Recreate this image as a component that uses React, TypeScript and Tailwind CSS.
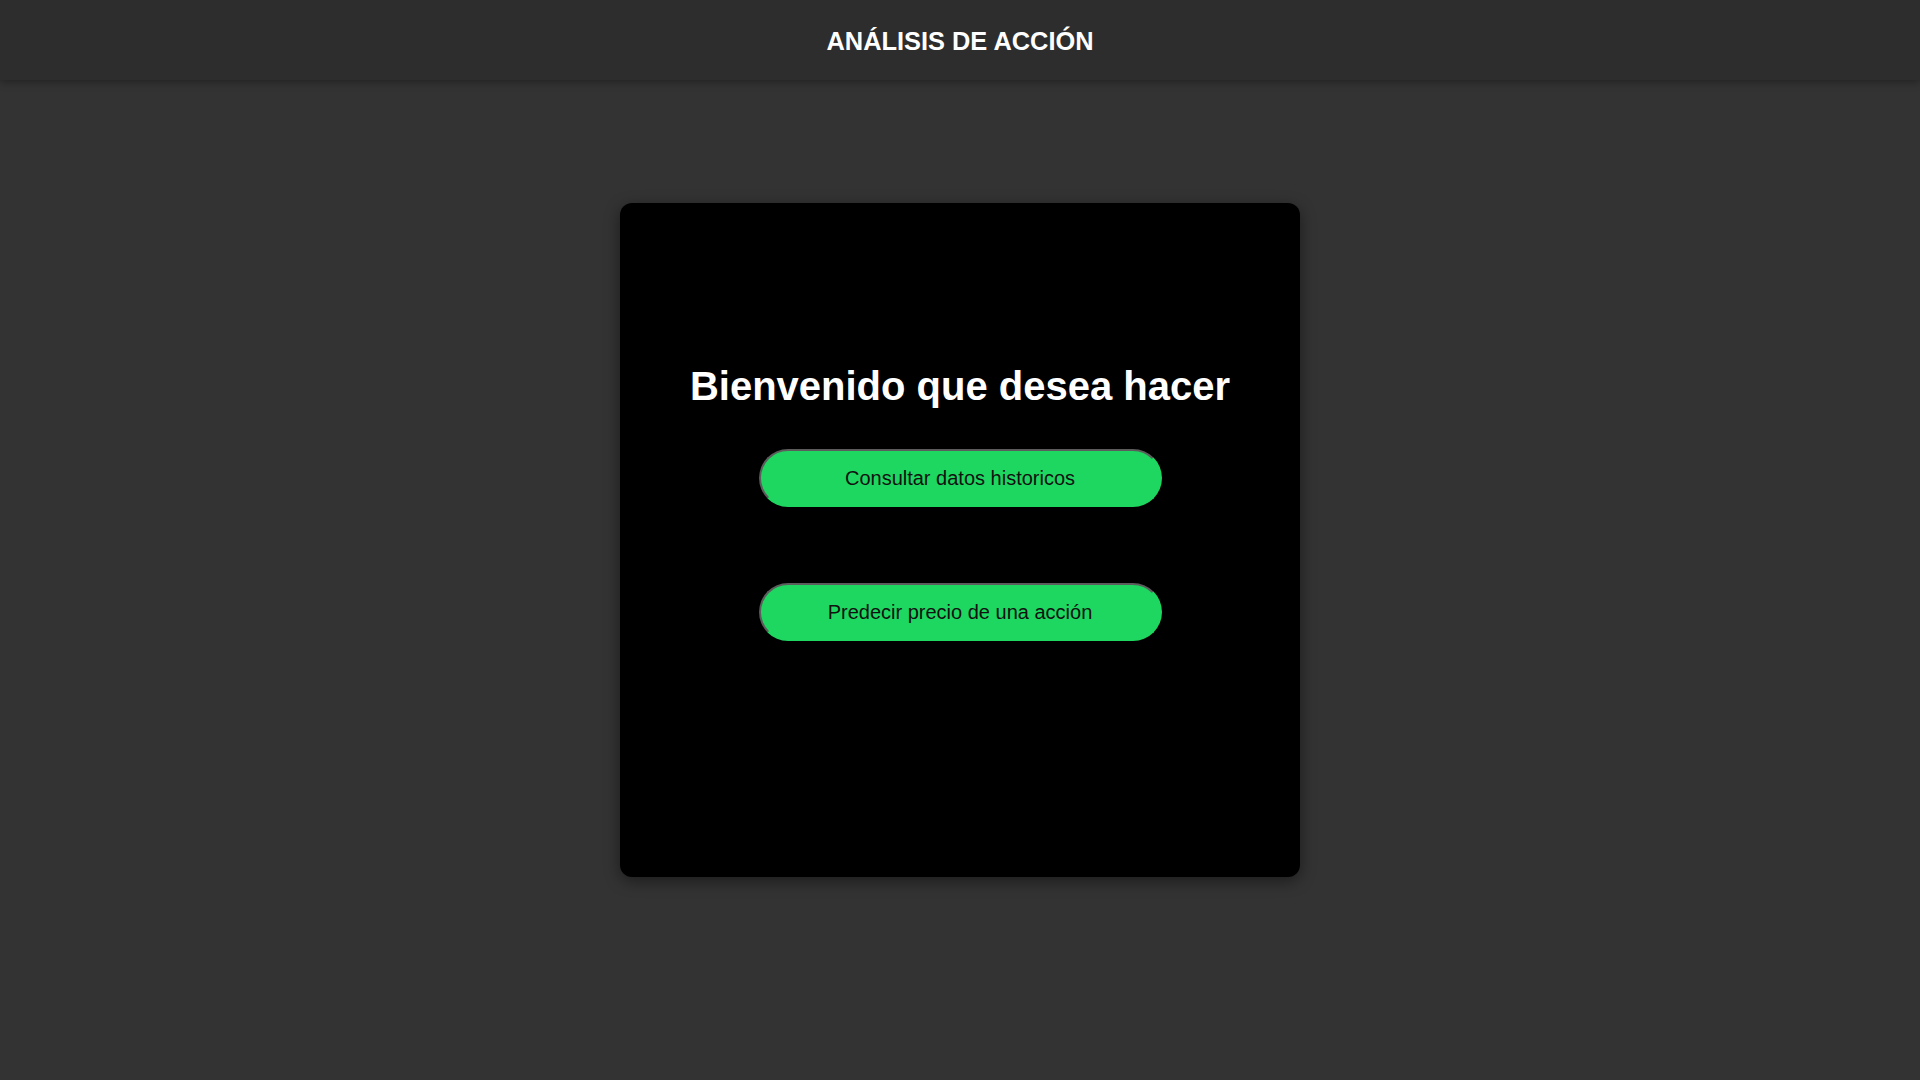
const App = () => {
  const actions = ["Consultar datos historicos", "Predecir precio de una acción"];

  return (
    <div className="min-h-screen bg-[#333333] font-['Liberation_Sans',Arial,sans-serif]">
      <header className="h-20 flex items-center justify-center pt-[2px] bg-[#2d2d2d] shadow-[0_2px_8px_rgba(0,0,0,0.35)]">
        <h1 className="text-[25.4px] font-bold text-white">ANÁLISIS DE ACCIÓN</h1>
      </header>

      <main className="flex justify-center pt-[123px]">
        <div className="w-[680px] h-[674px] bg-black rounded-xl shadow-[0_4px_16px_rgba(0,0,0,0.45)] flex flex-col items-center pt-[160px]">
          <h2 className="text-[40px] font-bold text-white leading-[46px]">Bienvenido que desea hacer</h2>
          <div className="flex flex-col gap-[76px] mt-[40px]">
            {actions.map((label) => (
              <button
                key={label}
                className="w-[403px] h-[58px] rounded-full bg-[#1ed760] text-[#111] text-[20px] border-2 border-t-[#5c5c5c] border-l-[#5c5c5c] border-r-[#1ed760] border-b-[#1ed760]"
              >
                {label}
              </button>
            ))}
          </div>
        </div>
      </main>
    </div>
  );
};

export default App;
